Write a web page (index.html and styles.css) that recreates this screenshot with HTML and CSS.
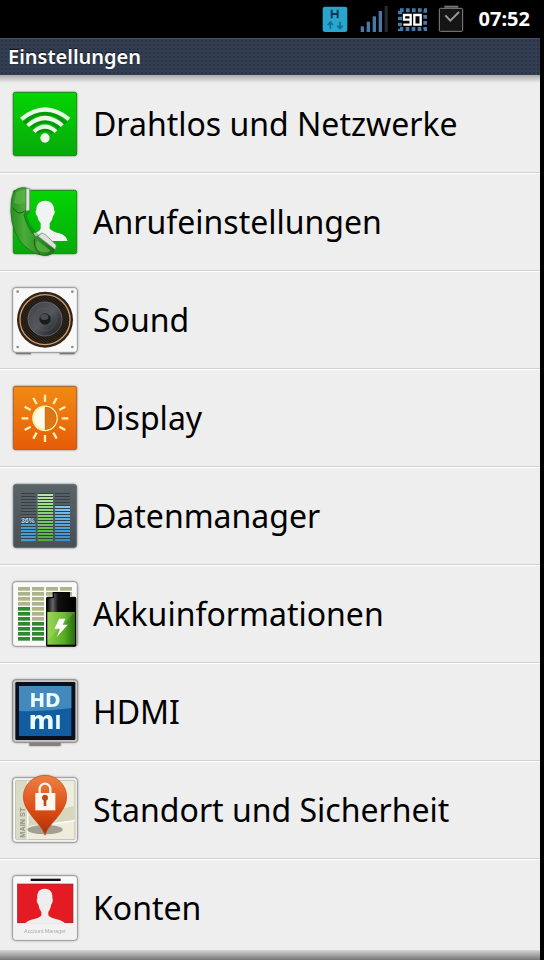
FILE: index.html
```
<!DOCTYPE html>
<html lang="de">

<head>
    <meta charset="utf-8">
    <title>Einstellungen</title>
    <meta name="viewport" content="width=device-width, initial-scale=1.0">
    <link rel="stylesheet" href="styles.css">
</head>

<body>

    <div class="status">
        <!-- HSPA data -->
        <svg class="status-icon" width="26" height="28" viewBox="0 0 78 84">
            <rect x="2" y="5" width="74" height="76" rx="7" fill="#2aa5cd" />
            <path d="M29 14V40M47 14V40M29 27H47" stroke="#123a52" stroke-width="6" fill="none" />
            <path d="M25 72V52M17 60L25 51L33 60M54 50V70M46 62L54 71L62 62" stroke="#0c7098" stroke-width="5" fill="none" />
        </svg>
        <!-- signal -->
        <svg class="status-icon" width="30" height="28" viewBox="0 0 90 84">
            <g fill="#4679a8">
                <rect x="8" y="64" width="10" height="17" />
                <rect x="26" y="50" width="10" height="31" />
                <rect x="44" y="34" width="10" height="47" />
                <rect x="62" y="18" width="10" height="63" />
            </g>
            <rect x="80" y="3" width="9" height="78" fill="#292c31" />
        </svg>
        <!-- battery level -->
        <svg class="status-icon" width="29" height="28" viewBox="0 0 87 84">
            <rect x="6" y="16" width="76" height="56" fill="none" stroke="#4679a8" stroke-width="12" stroke-dasharray="11 7" />
            <rect x="13" y="25" width="61" height="39" fill="#000" />
            <path d="M38 44H18V30H38V59H16M49 30H68V59H49Z" fill="none" stroke="#fff" stroke-width="7" />
        </svg>
        <!-- task done -->
        <svg class="status-icon" width="28" height="28" viewBox="0 0 84 84">
            <rect x="22" y="2" width="42" height="6" fill="#777" />
            <rect x="7" y="10" width="70" height="69" rx="3" fill="#151515" stroke="#858585" stroke-width="3" />
            <path d="M25 31L40 47L66 21" fill="none" stroke="#999" stroke-width="6" />
        </svg>
        <span class="clock">07:52</span>
    </div>

    <div class="screen">
        <h1 class="title">Einstellungen</h1>

        <nav class="list">
            <!-- wireless -->
            <a class="row" href="#wireless">
                <svg class="icon" viewBox="0 0 216 216">
                    <defs>
                        <linearGradient id="green" x1="0" y1="0" x2="0" y2="1">
                            <stop offset="0" stop-color="#04d504" />
                            <stop offset="1" stop-color="#07a90b" />
                        </linearGradient>
                    </defs>
                    <rect x="13" y="13" width="190" height="190" rx="6" fill="url(#green)" stroke="#178a18" stroke-width="3" />
                    <g fill="none" stroke="#087a10" stroke-width="10" opacity=".6">
                        <path d="M46 106A80 80 0 0 1 170 106M66 120A56 56 0 0 1 150 120M84 135A34 34 0 0 1 132 135" />
                    </g>
                    <g fill="#e9fbe6">
                        <path d="M33 89Q108 26 184 89L176 98Q108 44 41 98Z" />
                        <path d="M52 109Q108 58 164 109L156 117Q108 76 60 117Z" />
                        <path d="M71 127Q108 92 145 127L137 135Q108 110 79 135Z" />
                        <circle cx="108" cy="150" r="14" />
                    </g>
                </svg>
                <span class="label">Drahtlos und Netzwerke</span>
            </a>

            <!-- calls -->
            <a class="row" href="#calls">
                <svg class="icon" viewBox="0 0 216 216">
                    <defs>
                        <linearGradient id="phone" x1="0" y1="0" x2="1" y2="0">
                            <stop offset="0" stop-color="#2b8c22" />
                            <stop offset=".3" stop-color="#4aac38" />
                            <stop offset="1" stop-color="#176c15" />
                        </linearGradient>
                    </defs>
                    <rect x="13" y="13" width="190" height="190" rx="6" fill="url(#green)" stroke="#178a18" stroke-width="3" />
                    <path d="M108 44C127 44 136 57 135 72C139 74 137 86 132 90C130 101 126 107 122 112V128Q130 136 151 142Q172 149 176 165H52Q55 149 76 141Q92 136 95 128V112Q87 104 85 90C80 86 78 75 82 72C81 56 91 44 108 44Z" fill="#f1f3f1" />
                    <path d="M64 74L54 90Q64 124 94 151L78 160L36 120L30 60Z" fill="#075f0b" opacity=".35" />
                    <path d="M18 15Q30 3 52 6V73L45 87Q54 124 80 154L98 143L141 185Q131 212 102 208Q62 203 31 163Q0 113 7 46Q9 25 18 15Z" fill="url(#phone)" stroke="#23781d" stroke-width="3" />
                    <path d="M12 65Q28 93 50 73M77 158Q71 182 94 205" fill="none" stroke="#195f16" stroke-width="3" />
                    <path d="M21 20Q30 12 48 12V48Q32 60 15 51Z" fill="#60bc4c" opacity=".55" />
                    <path d="M51 8H62V73L51 76Z" fill="#dfe3dd" stroke="#727b70" stroke-width="2" />
                    <path d="M98 141L108 145L142 177L139 191L87 151Z" fill="#dce1da" stroke="#6f786e" stroke-width="2" />
                    <path d="M84 163L125 194Q109 204 92 196Q75 188 84 163Z" fill="#5db945" opacity=".7" />
                </svg>
                <span class="label">Anrufeinstellungen</span>
            </a>

            <!-- sound -->
            <a class="row" href="#sound">
                <svg class="icon" viewBox="0 0 216 216">
                    <defs>
                        <linearGradient id="cone" x1="0" y1="0" x2="1" y2="1">
                            <stop offset="0" stop-color="#3e4044" />
                            <stop offset=".5" stop-color="#54575b" />
                            <stop offset="1" stop-color="#17191c" />
                        </linearGradient>
                        <pattern id="mesh" width="6" height="6" patternUnits="userSpaceOnUse" patternTransform="rotate(40)">
                            <rect width="6" height="6" fill="#17130f" />
                            <rect width="6" height="2" fill="#43372b" />
                        </pattern>
                    </defs>
                    <path d="M18 205H66V211H22ZM152 205H200L196 211H152Z" fill="#777" />
                    <rect x="11" y="11" width="194" height="194" rx="9" fill="#f8f8f8" stroke="#999" stroke-width="3" />
                    <g fill="#8b8f94">
                        <circle cx="26" cy="23" r="4" />
                        <circle cx="190" cy="23" r="4" />
                        <circle cx="26" cy="189" r="4" />
                        <circle cx="190" cy="189" r="4" />
                    </g>
                    <circle cx="108" cy="107" r="84" fill="#30231c" />
                    <circle cx="108" cy="107" r="75" fill="url(#mesh)" stroke="#d09a60" stroke-width="4" />
                    <circle cx="108" cy="105" r="51" fill="url(#cone)" stroke="#777a7e" stroke-width="2" />
                    <circle cx="108" cy="106" r="34" fill="none" stroke="#6c7075" stroke-width="2" opacity=".4" />
                    <circle cx="108" cy="105" r="17" fill="#191b1d" />
                    <ellipse cx="106" cy="99" rx="12" ry="9" fill="#494c50" />
                </svg>
                <span class="label">Sound</span>
            </a>

            <!-- display -->
            <a class="row" href="#display">
                <svg class="icon" viewBox="0 0 216 216">
                    <defs>
                        <linearGradient id="orange" x1="0" y1="0" x2="0" y2="1">
                            <stop offset="0" stop-color="#f18b13" />
                            <stop offset="1" stop-color="#e65b08" />
                        </linearGradient>
                    </defs>
                    <rect x="13" y="13" width="190" height="190" rx="6" fill="url(#orange)" stroke="#a86132" stroke-width="3" />
                    <circle cx="108" cy="109" r="36" fill="#ed780f" stroke="#fff0ae" stroke-width="5" />
                    <path d="M108 75A34 34 0 0 0 108 143Z" fill="#fffbe4" />
                    <path d="M108 75V143A34 34 0 0 0 108 75" fill="#db7612" stroke="#ad5412" stroke-width="1" />
                    <g fill="none" stroke="#fff0b5" stroke-width="7">
                        <path d="M108 59V38M108 159V180M58 109H38M158 109H178" />
                        <path d="M83 66L73 48M133 66L143 48M83 152L73 170M133 152L143 170" />
                        <path d="M65 84L47 74M151 84L169 74M65 134L47 144M151 134L169 144" />
                    </g>
                </svg>
                <span class="label">Display</span>
            </a>

            <!-- data -->
            <a class="row" href="#data">
                <svg class="icon" viewBox="0 0 216 216">
                    <defs>
                        <linearGradient id="slate" x1="0" y1="0" x2="0" y2="1">
                            <stop offset="0" stop-color="#5a6468" />
                            <stop offset="1" stop-color="#475054" />
                        </linearGradient>
                        <linearGradient id="lime" x1="0" y1="0" x2="0" y2="1">
                            <stop offset="0" stop-color="#b4ee9c" />
                            <stop offset="1" stop-color="#4daa3c" />
                        </linearGradient>
                        <linearGradient id="sky" x1="0" y1="0" x2="0" y2="1">
                            <stop offset="0" stop-color="#84c5ee" />
                            <stop offset="1" stop-color="#388cc6" />
                        </linearGradient>
                        <pattern id="gaps" y="39" width="9" height="9" patternUnits="userSpaceOnUse">
                            <rect width="9" height="3" fill="#343e43" />
                        </pattern>
                    </defs>
                    <rect x="13" y="13" width="190" height="190" rx="9" fill="url(#slate)" stroke="#687175" stroke-width="3" />
                    <path d="M36 33H80V184H36ZM86 33H132V184H86ZM138 33H183V184H138Z" fill="#566065" />
                    <rect x="36" y="129" width="44" height="55" fill="#469bd0" />
                    <rect x="86" y="41" width="46" height="143" fill="url(#lime)" />
                    <rect x="138" y="78" width="45" height="106" fill="url(#sky)" />
                    <path d="M36 33H80V184H36ZM86 33H132V184H86ZM138 33H183V184H138Z" fill="url(#gaps)" />
                    <text class="percent" x="37" y="130">36%</text>
                </svg>
                <span class="label">Datenmanager</span>
            </a>

            <!-- battery -->
            <a class="row" href="#battery">
                <svg class="icon" viewBox="0 0 216 216">
                    <defs>
                        <pattern id="cells" x="27" y="27" width="42" height="15" patternUnits="userSpaceOnUse">
                            <rect width="36" height="11" fill="#adb489" />
                        </pattern>
                        <pattern id="cells-on" x="27" y="27" width="42" height="15" patternUnits="userSpaceOnUse">
                            <rect width="36" height="11" fill="#2d8b2d" />
                        </pattern>
                        <linearGradient id="charge" x1="0" y1="0" x2="1" y2="0">
                            <stop offset="0" stop-color="#8dce43" />
                            <stop offset=".6" stop-color="#57ae24" />
                            <stop offset="1" stop-color="#286d10" />
                        </linearGradient>
                        <linearGradient id="shell" x1="0" y1="0" x2="1" y2="0">
                            <stop offset="0" stop-color="#080808" />
                            <stop offset=".2" stop-color="#666" />
                            <stop offset=".4" stop-color="#111" />
                            <stop offset="1" stop-color="#000" />
                        </linearGradient>
                    </defs>
                    <rect x="11" y="11" width="194" height="194" rx="9" fill="#fafafa" stroke="#999" stroke-width="3" />
                    <rect x="27" y="27" width="162" height="165" fill="url(#cells)" />
                    <path d="M27 87H69V132H111V192H27Z" fill="#fafafa" />
                    <path d="M27 87H69V132H111V192H27Z" fill="url(#cells-on)" />
                    <path d="M131 42H183V56H197Q202 56 202 62V201Q202 206 197 206H116Q111 206 111 201V62Q111 56 116 56H131Z" fill="#050505" />
                    <path d="M135 46H179V60H195V102H115V62L135 60Z" fill="url(#shell)" />
                    <rect x="115" y="102" width="83" height="98" fill="url(#charge)" />
                    <path d="M115 102H198L115 190Z" fill="#d8f6aa" opacity=".18" />
                    <path d="M151 122H169L161 140H176L143 178L153 152H136Z" fill="#fff" />
                </svg>
                <span class="label">Akkuinformationen</span>
            </a>

            <!-- hdmi -->
            <a class="row" href="#hdmi">
                <svg class="icon" viewBox="0 0 216 216">
                    <rect x="61" y="197" width="94" height="13" fill="#858181" />
                    <rect x="11" y="11" width="195" height="188" rx="9" fill="#c8c5c4" stroke="#8d8a89" stroke-width="3" />
                    <rect x="19" y="18" width="180" height="174" rx="4" fill="#07101b" />
                    <rect x="30" y="30" width="157" height="150" fill="#125ca0" />
                    <path d="M30 30H187V96Q108 108 30 105Z" fill="#4389bd" />
                    <text class="hdmi" x="108" y="94">HD</text>
                    <text class="hdmi" x="108" y="160"><tspan class="hdmi-m">m</tspan>I</text>
                </svg>
                <span class="label">HDMI</span>
            </a>

            <!-- location -->
            <a class="row" href="#location">
                <svg class="icon" viewBox="0 0 216 216">
                    <defs>
                        <linearGradient id="pin" x1="0" y1="0" x2="0" y2="1">
                            <stop offset="0" stop-color="#ee8044" />
                            <stop offset=".6" stop-color="#db4a13" />
                            <stop offset="1" stop-color="#a92d08" />
                        </linearGradient>
                    </defs>
                    <rect x="11" y="11" width="194" height="194" rx="9" fill="#fafafa" stroke="#999" stroke-width="3" />
                    <rect x="20" y="19" width="178" height="178" rx="3" fill="#f0ecdb" stroke="#a2a58e" stroke-width="2" />
                    <path d="M21 20H60V196H21Z" fill="#d9dbc4" />
                    <path d="M60 125L198 95V138L60 155Z" fill="#d6d7bd" />
                    <path d="M56 20V196M60 160L198 140" fill="none" stroke="#fff" stroke-width="4" />
                    <text class="street" transform="translate(49 191) rotate(-90)">MAIN ST</text>
                    <ellipse cx="108" cy="167" rx="53" ry="14" fill="#54544b" opacity=".5" />
                    <path d="M108 184C101 151 43 116 43 69A65 65 0 0 1 173 69C173 116 115 151 108 184Z" fill="url(#pin)" stroke="#bb4513" stroke-width="2" />
                    <path d="M92 60V45A16 16 0 0 1 124 45V60" fill="none" stroke="#fff5e8" stroke-width="7" />
                    <rect x="79" y="57" width="60" height="52" fill="#fff7ec" />
                    <path d="M104 74H112V96H104Z" fill="#b84a1c" />
                    <circle cx="108" cy="71" r="9" fill="#b84a1c" />
                </svg>
                <span class="label">Standort und Sicherheit</span>
            </a>

            <!-- accounts -->
            <a class="row" href="#accounts">
                <svg class="icon" viewBox="0 0 216 216">
                    <rect x="11" y="11" width="194" height="194" rx="9" fill="#fafafa" stroke="#999" stroke-width="3" />
                    <rect x="65" y="20" width="90" height="7" fill="#111" />
                    <rect x="25" y="36" width="167" height="117" fill="#e41b22" stroke="#8b3034" stroke-width="2" />
                    <path d="M107 50C124 50 132 62 130 79C133 81 131 94 127 97C125 108 122 115 118 120V130Q124 138 140 141Q160 145 168 154H48Q56 145 76 141Q92 138 97 130V120Q90 111 88 97C83 93 82 82 85 79C83 61 91 50 107 50Z" fill="#eee" />
                    <rect x="14" y="154" width="188" height="48" rx="7" fill="#f2f2f2" />
                    <text class="caption" x="108" y="183">Account Manager</text>
                </svg>
                <span class="label">Konten</span>
            </a>
        </nav>
    </div>

    <div class="fade"></div>

</body>

</html>
```
FILE: styles.css
```
body {
    margin: 0;
    background: #000;
    font-family: "Noto Sans", "Open Sans", sans-serif;
}

.status {
    display: flex;
    justify-content: flex-end;
    align-items: center;
    gap: 10px;
    height: 38px;
    padding-right: 14px;
    background: #000;
    color: #fff;
}

.status-icon {
    flex: none;
}

.clock {
    margin-left: 4px;
    font-size: 20px;
    font-weight: bold;
    line-height: 36px;
}

.screen {
    margin-right: 4px;
    min-height: calc(100vh - 38px);
    background: #eee;
}

.title {
    margin: 0;
    padding: 0 8px;
    border-top: 1px solid #454f61;
    border-bottom: 1px solid #000;
    background-color: #343e51;
    background-image: radial-gradient(#273349 1px, transparent 1px);
    background-size: 4px 4px;
    color: #fff;
    font-size: 20px;
    font-weight: 600;
    line-height: 36px;
    text-shadow: 0 -1px 1px #111;
}

.list {
    margin-top: -1px;
    background: linear-gradient(#aaa, #eee 8px);
}

.row {
    display: flex;
    align-items: center;
    gap: 12px;
    box-sizing: border-box;
    height: 98px;
    padding-left: 9px;
    border-bottom: 1px solid #d0d0d0;
    color: #000;
    text-decoration: none;
}

.row + .row {
    border-top: 1px solid #fff;
}

.icon {
    flex: none;
    width: 72px;
    height: 72px;
    filter: drop-shadow(0 0 1px rgba(0, 0, 0, .3));
}

.label {
    font-size: 32px;
    line-height: 40px;
}

/* lettering inside the icons */
.percent {
    font: bold 20px "Liberation Sans", sans-serif;
    fill: #a9daf7;
}

.hdmi {
    font: bold 56px "DejaVu Sans", sans-serif;
    fill: #e9fbff;
    text-anchor: middle;
}

.hdmi-m {
    font-size: 75px;
}

.street {
    font: bold 22px "Liberation Sans", sans-serif;
    fill: #8f9284;
}

.caption {
    font: 16px "Liberation Sans", sans-serif;
    fill: #aaa;
    text-anchor: middle;
}

.fade {
    position: fixed;
    left: 0;
    right: 4px;
    bottom: 0;
    height: 10px;
    background: linear-gradient(#d5d5d5, #777);
}
```
